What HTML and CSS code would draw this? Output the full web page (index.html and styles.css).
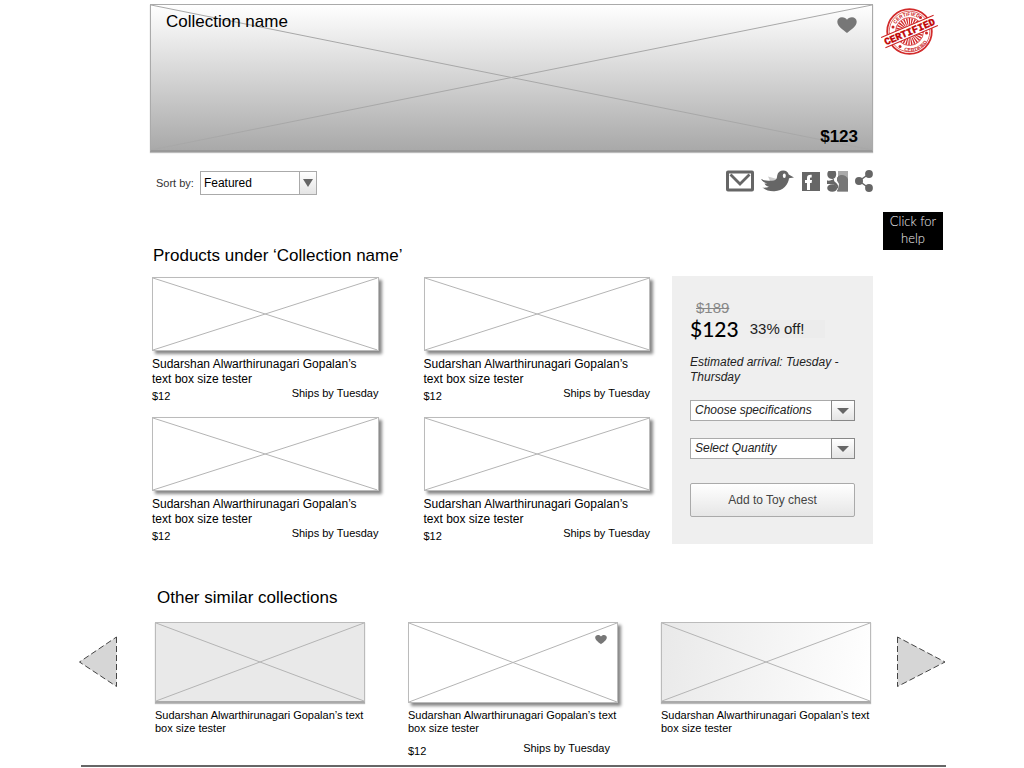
FILE: index.html
```html
<!DOCTYPE html>
<html lang="en">
<head>
<meta charset="utf-8">
<meta name="viewport" content="width=device-width, initial-scale=1">
<title>Collection name</title>
<link rel="stylesheet" href="styles.css">
</head>
<body>
<svg class="defs" aria-hidden="true">
  <symbol id="cross" viewBox="0 0 100 100" preserveAspectRatio="none">
    <path d="M0 0L100 100M0 100L100 0" fill="none" stroke="currentColor" vector-effect="non-scaling-stroke"/>
  </symbol>
  <symbol id="heart" viewBox="0 0 20 16">
    <path d="M10 16C7 13.200 .3 9.500 .3 4.700C.3 2 2.500 .3 5 .3C7.300 .3 9.200 1.500 10 2.800C10.800 1.500 12.700 .3 15 .3C17.500 .3 19.700 2 19.700 4.700C19.700 9.500 13 13.200 10 16Z" fill="currentColor"/>
  </symbol>
</svg>
<div class="page">
  <div class="top">
    <main class="main">
      <header class="hero">
        <svg class="cross"><use href="#cross"/></svg>
        <div class="hero-row">
          <h1 class="heading">Collection name</h1>
          <button class="icon-button" aria-label="Add to favourites"><svg class="heart"><use href="#heart"/></svg></button>
        </div>
        <p class="hero-price">$123</p>
      </header>

      <div class="toolbar">
        <label class="sort-label" for="sort">Sort by:</label>
        <span class="select sort">
          <select id="sort"><option>Featured</option></select>
          <span class="select-arrow"><svg width="10" height="8" viewBox="0 0 10 8"><path d="M0 0H10L5 8Z" fill="#666"/></svg></span>
        </span>
        <nav class="social" aria-label="Share">
          <a href="#" aria-label="Email"><svg width="28" height="22" viewBox="0 0 28 22"><rect x="1.500" y="2" width="25" height="18" rx=".5" fill="#fff" stroke="#666" stroke-width="3"/><path d="M4.500 4.500L14 14L23.500 4.500" fill="none" stroke="#666" stroke-width="2.800"/></svg></a>
          <a href="#" aria-label="Twitter"><svg width="34" height="22" viewBox="0 0 34 22"><path d="M7 6.500L16 9L15 14L9 11Z" fill="#ccc"/><path d="M0 9C5 11 9 11 13 10.500C15.500 10 16 8 16.200 5.500C16.700 2.200 19.300 .5 22.200 .5C25 .5 27 1.900 27.700 4.500L33 7.500L28 8.300C27.500 14.500 22 21 13.500 21.300C9 21.500 5 20.500 1.500 17.500C4 18 6.500 17.500 8 16.800C5.500 16.300 4 15 3.500 13.500L6.500 13.600C3 12.500 1 11 0 9Z" fill="#666"/><ellipse cx="23.300" cy="5.800" rx="1.500" ry="2.300" fill="#fff"/></svg></a>
          <a href="#" aria-label="Facebook"><svg width="18" height="22" viewBox="0 0 18 22"><rect y="2" width="18" height="19" fill="#666"/><path d="M5 20V13H3V10H5V8C5 5.500 6.500 4.500 9.700 4.800V7.500C8.500 7.300 8 7.600 8 8.500V10H10L9.600 13H8V20Z" fill="#fff"/></svg></a>
          <a href="#" aria-label="Google"><svg width="21" height="22" viewBox="0 0 21 22"><rect x="11" y="1" width="10" height="20.500" fill="#aaa"/><path d="M10 7C14 3.500 19 5 21 9V21.500H10Z" fill="#777"/><path d="M0 0H10.500L11 6.500L9 9L12 14L11 19L9 22H0Z" fill="#fff"/><path d="M1.500 1H8.500C9.500 3 9.500 6 8 7.700C6 9.700 2.500 9 1 7C0 5 0 2.500 1.500 1Z" fill="#666"/><path d="M0 10.500C3 11 5 10 7 9C6.500 11 8 12 9.500 13.200C11.500 15 11.500 17 10.500 19C10 16 7.500 14.300 4.500 14L0 14Z" fill="#666"/><ellipse cx="5.200" cy="18" rx="5" ry="3.800" fill="#666"/></svg></a>
          <a href="#" aria-label="More sharing options"><svg width="18" height="22" viewBox="0 0 18 22"><path d="M14 4L4 11L14 18" fill="none" stroke="#666" stroke-width="1.500"/><circle cx="14" cy="4" r="3.900" fill="#666"/><circle cx="4" cy="11" r="4" fill="#666"/><circle cx="14" cy="18" r="3.900" fill="#666"/></svg></a>
        </nav>
      </div>

      <h2 class="heading products-heading">Products under ‘Collection name’</h2>
      <div class="shop">
        <div class="products">
          <article class="product">
            <div class="picture raised"><svg class="cross"><use href="#cross"/></svg></div>
            <h3 class="product-name">Sudarshan Alwarthirunagari Gopalan’s text box size tester</h3>
            <div class="meta"><span class="price">$12</span><span>Ships by Tuesday</span></div>
          </article>
          <article class="product">
            <div class="picture raised"><svg class="cross"><use href="#cross"/></svg></div>
            <h3 class="product-name">Sudarshan Alwarthirunagari Gopalan’s text box size tester</h3>
            <div class="meta"><span class="price">$12</span><span>Ships by Tuesday</span></div>
          </article>
          <article class="product">
            <div class="picture raised"><svg class="cross"><use href="#cross"/></svg></div>
            <h3 class="product-name">Sudarshan Alwarthirunagari Gopalan’s text box size tester</h3>
            <div class="meta"><span class="price">$12</span><span>Ships by Tuesday</span></div>
          </article>
          <article class="product">
            <div class="picture raised"><svg class="cross"><use href="#cross"/></svg></div>
            <h3 class="product-name">Sudarshan Alwarthirunagari Gopalan’s text box size tester</h3>
            <div class="meta"><span class="price">$12</span><span>Ships by Tuesday</span></div>
          </article>
        </div>

        <aside class="buy">
          <s class="old-price">$189</s>
          <div class="deal"><strong class="new-price">$123</strong><span class="discount">33% off!</span></div>
          <p class="arrival">Estimated arrival: Tuesday - Thursday</p>
          <span class="select option">
            <select aria-label="Specifications"><option>Choose specifications</option></select>
            <span class="select-arrow"><svg width="12" height="6" viewBox="0 0 12 6"><path d="M0 0H12L6 6Z" fill="#666"/></svg></span>
          </span>
          <span class="select option">
            <select aria-label="Quantity"><option>Select Quantity</option></select>
            <span class="select-arrow"><svg width="12" height="6" viewBox="0 0 12 6"><path d="M0 0H12L6 6Z" fill="#666"/></svg></span>
          </span>
          <button class="add">Add to Toy chest</button>
        </aside>
      </div>
    </main>

    <div class="rail">
      <svg class="stamp" width="58" height="50" viewBox="0 0 58 50" role="img" aria-label="Certified">
        <defs>
          <path id="arc-top" d="M13 25A16 16 0 0 1 43 17"/>
          <path id="arc-bottom" d="M19 42A20 20 0 0 0 48 31"/>
        </defs>
        <g fill="none" stroke="#d22b2b">
          <circle cx="28.500" cy="24.500" r="22.300" stroke-width="1.800"/>
          <circle cx="28.500" cy="24.500" r="20.300" stroke-width=".7"/>
          <circle cx="28.500" cy="24.500" r="14" stroke-width=".8"/>
          <circle cx="28.500" cy="24.500" r="10" stroke-width="7" stroke-dasharray="1.200 1"/>
        </g>
        <g fill="#c22">
          <circle cx="12" cy="20" r="1.500"/><circle cx="39.500" cy="10.500" r="1.500"/><circle cx="19" cy="39.500" r="1.500"/><circle cx="45.500" cy="26" r="1.500"/>
        </g>
        <g class="stamp-small">
          <text><textPath href="#arc-top" startOffset="50%" text-anchor="middle">CERTIFIED</textPath></text>
          <text><textPath href="#arc-bottom" startOffset="50%" text-anchor="middle">CERTIFIED</textPath></text>
        </g>
        <g transform="rotate(-23 28.500 24.500)">
          <rect x="0" y="19" width="57" height="11" fill="#fff"/>
          <path d="M0 19H57M0 30H57" stroke="#c22"/>
          <text class="stamp-large" x="28.500" y="28" text-anchor="middle">CERTIFIED</text>
        </g>
      </svg>
      <button class="help">Click for help</button>
    </div>
  </div>

  <section class="similar">
    <button class="icon-button arrow" aria-label="Previous"><svg width="38" height="52" viewBox="0 0 38 52"><path d="M37.500 1V50.500L.5 26Z" fill="#d6d6d6" stroke="#444" stroke-dasharray="6 3"/></svg></button>
    <div class="similar-body">
      <h2 class="heading similar-heading">Other similar collections</h2>
      <div class="collections">
        <article>
          <div class="picture flat"><svg class="cross"><use href="#cross"/></svg></div>
          <h3 class="collection-name">Sudarshan Alwarthirunagari Gopalan’s text box size tester</h3>
        </article>
        <article>
          <div class="picture raised"><svg class="cross"><use href="#cross"/></svg><button class="icon-button favourite" aria-label="Add to favourites"><svg class="heart small"><use href="#heart"/></svg></button></div>
          <h3 class="collection-name">Sudarshan Alwarthirunagari Gopalan’s text box size tester</h3>
          <div class="meta collection-meta"><span class="price">$12</span><span>Ships by Tuesday</span></div>
        </article>
        <article>
          <div class="picture flat faded"><svg class="cross"><use href="#cross"/></svg></div>
          <h3 class="collection-name">Sudarshan Alwarthirunagari Gopalan’s text box size tester</h3>
        </article>
      </div>
    </div>
    <button class="icon-button arrow" aria-label="Next"><svg width="49" height="52" viewBox="0 0 49 52"><path d="M.5 1V50.500L48 26Z" fill="#d6d6d6" stroke="#444" stroke-dasharray="6 3"/></svg></button>
  </section>
  <hr class="rule">
</div>
</body>
</html>
```
FILE: styles.css
```css
* { box-sizing: border-box; }

body {
  margin: 0;
  background: #fff;
  color: #000;
  font: 12px/15px "Liberation Sans", Arial, sans-serif;
}

h1, h2, h3, p { margin: 0; font-weight: normal; }

button, select { font: inherit; color: inherit; }

.defs { position: absolute; width: 0; height: 0; }

.page { padding: 4px 78px 0 79px; }

.top {
  display: grid;
  grid-template-columns: minmax(0, 1fr) 73px;
  padding-left: 71px;
}

.heading { font-size: 17px; line-height: 20px; }

.icon-button {
  display: block;
  padding: 0;
  border: 0;
  background: none;
  cursor: pointer;
}

.icon-button svg { display: block; }

.cross {
  position: absolute;
  inset: 0;
  width: 100%;
  height: 100%;
  color: #b4b4b4;
}

.heart { width: 20px; height: 16px; color: #777; }
.heart.small { width: 12px; height: 11px; }

/* Banner */
.hero {
  position: relative;
  display: flex;
  flex-direction: column;
  justify-content: space-between;
  min-height: 148px;
  padding: 6px 14px 3px 15px;
  border: 1px solid #aaa;
  border-bottom: 2px solid #999;
  background: linear-gradient(#fff, #a9a9a9);
  box-shadow: 0 1px 1px #bbb;
}

.hero .cross { color: #a8a8a8; }

.hero-row {
  position: relative;
  display: flex;
  justify-content: space-between;
  align-items: center;
}

.hero-row .icon-button { padding: 6px 1px 0 0; }

.hero-price {
  position: relative;
  font-size: 17px;
  line-height: 20px;
  font-weight: bold;
  text-align: right;
}

/* Sorting and sharing */
.toolbar {
  display: flex;
  align-items: center;
  gap: 6px;
  margin-top: 18px;
  padding-left: 6px;
}

.sort-label { color: #333; font-size: 11px; }

.select { display: grid; grid-template-columns: minmax(0, 1fr) auto; }

.select select {
  grid-area: 1 / 1 / 2 / 3;
  width: 100%;
  margin: 0;
  padding: 0 4px;
  border: 1px solid #aaa;
  border-radius: 0;
  background: #fff;
  appearance: none;
}

.select-arrow {
  grid-area: 1 / 2;
  z-index: 1;
  display: grid;
  place-items: center;
  border: 1px solid #aaa;
  background: linear-gradient(#fff, #e4e4e4);
  pointer-events: none;
}

.sort { width: 117px; height: 24px; }
.sort .select-arrow { width: 18px; }
.sort select { padding: 0 3px; }

.social { display: flex; gap: 7px; margin-left: auto; padding-bottom: 4px; }
.social a, .social svg { display: block; }

/* Products */
.products-heading { margin-top: 50px; padding-left: 3px; }

.shop {
  display: grid;
  grid-template-columns: minmax(0, 1fr) 201px;
  gap: 22px;
  margin-top: 10px;
  padding-left: 2px;
}

.products {
  display: grid;
  grid-template-columns: repeat(2, minmax(0, 1fr));
  gap: 14px 45px;
  align-content: start;
  padding-top: 1px;
}

.picture { position: relative; border: 1px solid #bbb; }
.product .picture { height: 74px; }
.raised { background: #fff; box-shadow: 3px 3px 3px #888; }

.product-name { margin-top: 6px; font-size: 12px; }

.meta {
  display: flex;
  justify-content: space-between;
  min-height: 16px;
  font-size: 11px;
  line-height: 13px;
}

.price { align-self: flex-end; }

/* Purchase panel */
.buy {
  display: flex;
  flex-direction: column;
  align-items: stretch;
  min-height: 268px;
  padding: 23px 18px 20px;
  background: #efefef;
  color: #222;
}

.old-price {
  padding-left: 6px;
  color: #888;
  font-size: 15px;
  line-height: 18px;
}

.deal { display: flex; align-items: center; gap: 11px; line-height: 24px; }

.new-price {
  color: #000;
  font-family: Lato, sans-serif;
  font-size: 21px;
  font-weight: 500;
}

.discount {
  padding-right: 20px;
  background: #ececec;
  font-size: 15px;
  line-height: 18px;
}

.arrival { margin-top: 14px; font-style: italic; }

.option { height: 21px; margin-top: 15px; }
.option + .option { margin-top: 17px; }
.option select { font-style: italic; }
.option .select-arrow { width: 24px; border-color: #888; }

.add {
  height: 34px;
  margin-top: 24px;
  border: 1px solid #aaa;
  border-radius: 2px;
  background: linear-gradient(#fff, #e6e6e6);
  color: #444;
}

/* Right rail */
.rail {
  display: flex;
  flex-direction: column;
  align-items: flex-start;
  padding: 3px 0 0 8px;
}

.stamp-small {
  fill: #c22;
  font: bold 5px "Liberation Sans", sans-serif;
}

.stamp-large {
  fill: #c00000;
  stroke: #c00000;
  stroke-width: .4px;
  font: bold 10px "Liberation Mono", monospace;
}

.help {
  width: 60px;
  margin: 155px 0 0 2px;
  padding: 1px 2px 3px;
  border: 0;
  background: #000;
  color: #eee;
  font-family: Lato, sans-serif;
  font-size: 13px;
  font-weight: 300;
  line-height: 17px;
}

/* Similar collections */
.similar {
  display: grid;
  grid-template-columns: 38px minmax(0, 1fr) 49px;
  align-items: center;
  margin-top: 44px;
}

.arrow { padding-bottom: 22px; }

.similar-body { padding: 0 26px 0 38px; }
.similar-heading { padding-left: 2px; }

.collections {
  display: grid;
  grid-template-columns: repeat(3, minmax(0, 1fr));
  gap: 43px;
  margin-top: 14px;
}

.collections .picture { height: 81px; }

.flat {
  border-bottom: 2px solid #aaa;
  background: #e9e9e9;
  box-shadow: 0 1px 1px #bbb;
}

.faded { background: linear-gradient(100deg, #e9e9e9, #fff); }

.favourite { position: absolute; top: 11px; right: 10px; }

.collection-name { margin-top: 6px; font-size: 11px; line-height: 13px; }
.collection-meta { margin-top: 7px; padding-right: 8px; }

.rule {
  height: 2px;
  margin: 7px 0 0 2px;
  border: 0;
  background: #666;
}
```
